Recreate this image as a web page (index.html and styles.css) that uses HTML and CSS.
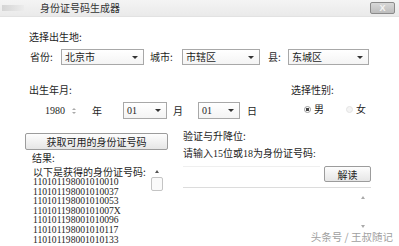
FILE: index.html
```html
<!DOCTYPE html>
<html lang="zh-CN">

<head>
    <meta charset="UTF-8">
    <meta name="viewport" content="width=device-width, initial-scale=1.0">
    <title>身份证号码生成器</title>
    <link rel="stylesheet" href="styles.css">
</head>

<body>
    <div class="window">
        <div class="titlebar">
            <span class="app-icon"></span>
            <span class="title">身份证号码生成器</span>
            <span class="close-btn">X</span>
        </div>

        <div class="content">
            <div class="label">选择出生地:</div>

            <div class="place-row">
                <span class="field-label province-label">省份:</span>
                <div class="combo combo-province"><span>北京市</span><i class="caret"></i></div>
                <span class="field-label city-label">城市:</span>
                <div class="combo combo-city"><span>市辖区</span><i class="caret"></i></div>
                <span class="field-label county-label">县:</span>
                <div class="combo combo-county"><span>东城区</span><i class="caret"></i></div>
            </div>

            <div class="birth-row">
                <div class="birth">
                    <div class="label">出生年月:</div>
                    <div class="date-row">
                        <span class="year">1980</span>
                        <span class="spinner"><i class="up"></i><i class="down"></i></span>
                        <span class="unit unit-year">年</span>
                        <div class="combo combo-month"><span>01</span><i class="caret"></i></div>
                        <span class="unit unit-month">月</span>
                        <div class="combo combo-day"><span>01</span><i class="caret"></i></div>
                        <span class="unit unit-day">日</span>
                    </div>
                </div>

                <div class="gender">
                    <div class="label">选择性别:</div>
                    <div class="radios">
                        <span class="radio checked"></span><span class="radio-text">男</span>
                        <span class="radio faded"></span><span class="radio-text">女</span>
                    </div>
                </div>
            </div>

            <div class="bottom">
                <div class="left">
                    <button class="get-btn">获取可用的身份证号码</button>
                    <div class="label result-label">结果:</div>
                    <div class="result-box">
                        <div class="result-list">
                            <div class="heading">以下是获得的身份证号码:</div>
                            <div>110101198001010010</div>
                            <div>110101198001010037</div>
                            <div>110101198001010053</div>
                            <div>11010119800101007X</div>
                            <div>110101198001010096</div>
                            <div>110101198001010117</div>
                            <div>110101198001010133</div>
                        </div>
                        <div class="scroll">
                            <i class="arrow-up"></i>
                            <span class="thumb"></span>
                        </div>
                    </div>
                </div>

                <div class="right">
                    <div class="label">验证与升降位:</div>
                    <div class="label hint">请输入15位或18为身份证号码:</div>
                    <div class="check-row">
                        <div class="id-input"></div>
                        <button class="read-btn">解读</button>
                    </div>
                    <div class="info-box">
                        <i class="arrow-up small"></i>
                        <i class="arrow-down small"></i>
                    </div>
                </div>
            </div>
        </div>

        <div class="watermark">头条号 / 王叔随记</div>
    </div>
</body>

</html>
```

FILE: styles.css
```css
* {
    box-sizing: border-box;
    margin: 0;
    padding: 0;
}

body {
    background-color: #ffffff;
    font-family: 'Noto Sans CJK SC', sans-serif;
    font-size: 10px;
    color: #1e1e1e;
}

.window {
    position: relative;
    width: 399px;
    height: 246px;
    overflow: hidden;
    background-color: #ffffff;
}

.titlebar {
    height: 17px;
    display: flex;
    align-items: center;
    background: linear-gradient(#f4f4f4, #eaeaea);
    border-bottom: 1px solid #e2e2e2;
}

.app-icon {
    width: 22px;
    height: 6px;
    margin-left: 2px;
    background: linear-gradient(90deg, #d4d4d4, #ececec);
}

.title {
    margin-left: 16px;
    line-height: 12px;
    font-size: 10px;
    color: #333;
}

.close-btn {
    margin-left: auto;
    margin-right: 4px;
    width: 25px;
    height: 12px;
    border: 1px solid #8a8a8a;
    border-radius: 2px;
    background: linear-gradient(#d8d8d8, #bdbdbd);
    color: #f4f4f4;
    font-family: 'Liberation Sans', sans-serif;
    font-size: 9px;
    font-weight: bold;
    line-height: 10px;
    text-align: center;
}

.content {
    padding: 14px 0 0 29px;
}

.label {
    line-height: 12px;
    white-space: nowrap;
}

/* place row */
.place-row {
    display: flex;
    align-items: center;
    margin-top: 6px;
    height: 16px;
}

.field-label {
    flex-shrink: 0;
    line-height: 12px;
    white-space: nowrap;
}

.province-label {
    margin-left: 1px;
    width: 31px;
}

.city-label {
    margin-left: 6px;
    width: 32px;
}

.county-label {
    margin-left: 8px;
    width: 20px;
}

.combo {
    display: flex;
    flex-shrink: 0;
    align-items: center;
    height: 16px;
    border: 1px solid #a8a8a8;
    background: linear-gradient(#ffffff, #f4f4f4);
    padding: 0 5px 0 3px;
}

.combo span {
    flex: 1;
    line-height: 12px;
}

.caret {
    width: 0;
    height: 0;
    border-left: 3px solid transparent;
    border-right: 3px solid transparent;
    border-top: 3px solid #333;
}

.combo-province {
    width: 83px;
}

.combo-city {
    width: 78px;
}

.combo-county {
    width: 81px;
}

/* birth date + gender */
.birth-row {
    display: flex;
    margin-top: 19px;
}

.birth {
    width: 262px;
    flex-shrink: 0;
}

.date-row {
    display: flex;
    align-items: center;
    margin-top: 6px;
    height: 17px;
}

.year {
    flex-shrink: 0;
    width: 24px;
    margin-left: 16px;
    font-family: 'Liberation Serif', serif;
    font-size: 10px;
}

.spinner {
    display: flex;
    flex-direction: column;
    gap: 2px;
    width: 4px;
    margin-left: 3px;
}

.spinner i {
    width: 0;
    height: 0;
    border-left: 2px solid transparent;
    border-right: 2px solid transparent;
}

.spinner .up {
    border-bottom: 2px solid #aaa;
}

.spinner .down {
    border-top: 2px solid #aaa;
}

.unit {
    flex-shrink: 0;
    width: 10px;
    line-height: 12px;
}

.unit-year {
    margin-left: 16px;
}

.combo-month {
    margin-left: 21px;
    width: 44px;
    height: 17px;
}

.unit-month {
    margin-left: 6px;
}

.combo-day {
    margin-left: 15px;
    width: 42px;
    height: 17px;
}

.unit-day {
    margin-left: 7px;
}

.combo-month span,
.combo-day span {
    font-family: 'Liberation Serif', serif;
}

.gender {
    flex-shrink: 0;
}

.radios {
    display: flex;
    align-items: center;
    margin-top: 6px;
    height: 14px;
    padding-left: 13px;
}

.radio {
    flex-shrink: 0;
    width: 7px;
    height: 7px;
    border: 1px solid #bbb;
    border-radius: 50%;
    background: #fff;
}

.radio.checked {
    background: radial-gradient(#444 0 1.5px, #fff 2px);
    border-color: #999;
}

.radio.faded {
    margin-left: 22px;
    border-color: #e4e4e4;
    background: #f4f4f4;
}

.radio-text {
    margin-left: 3px;
    line-height: 12px;
}

/* bottom area */
.bottom {
    display: flex;
    margin-top: 11px;
}

.left {
    width: 143px;
    margin-left: -4px;
}

.get-btn {
    display: block;
    width: 143px;
    height: 17px;
    margin-top: 3px;
    border: 1px solid #9c9c9c;
    border-radius: 2px;
    background: linear-gradient(#fdfdfd, #e6e6e6);
    font-family: 'Noto Sans CJK SC', sans-serif;
    font-size: 10px;
    line-height: 14px;
    color: #1e1e1e;
}

.result-label {
    margin-top: 2px;
    margin-left: 7px;
}

.result-box {
    display: flex;
    margin-top: 2px;
    margin-left: 8px;
    width: 130px;
}

.result-list {
    flex: 1;
    font-family: 'Liberation Serif', serif;
    font-size: 9.6px;
    line-height: 9.6px;
}

.result-list .heading {
    font-family: 'Noto Sans CJK SC', sans-serif;
    font-size: 10px;
    line-height: 11px;
}

.scroll {
    display: flex;
    flex-direction: column;
    align-items: center;
    width: 12px;
    padding-top: 4px;
}

.arrow-up {
    width: 0;
    height: 0;
    border-left: 2px solid transparent;
    border-right: 2px solid transparent;
    border-bottom: 3px solid #555;
}

.arrow-down {
    width: 0;
    height: 0;
    border-left: 2px solid transparent;
    border-right: 2px solid transparent;
    border-top: 3px solid #555;
}

.thumb {
    width: 12px;
    height: 14px;
    margin-top: 4px;
    border: 1px solid #c4c4c4;
    border-radius: 2px;
    background: #fafafa;
}

.right {
    margin-left: 15px;
    width: 188px;
}

.hint {
    margin-top: 6px;
    font-family: 'Liberation Serif', 'Noto Sans CJK SC', serif;
}

.check-row {
    display: flex;
    align-items: center;
    margin-top: 6px;
    height: 16px;
}

.id-input {
    flex: 1;
    height: 16px;
    border-top: 1px solid #efefef;
}

.read-btn {
    width: 47px;
    height: 16px;
    margin-left: 4px;
    border: 1px solid #9c9c9c;
    border-radius: 2px;
    background: linear-gradient(#fdfdfd, #e6e6e6);
    font-family: 'Noto Sans CJK SC', sans-serif;
    font-size: 10px;
    line-height: 13px;
    color: #1e1e1e;
}

.info-box {
    display: flex;
    flex-direction: column;
    align-items: flex-end;
    justify-content: space-between;
    margin-top: 5px;
    height: 44px;
    padding: 8px 6px 3px 0;
    border-top: 1px solid #dcdcdc;
}

.small {
    opacity: 0.5;
}

.watermark {
    position: absolute;
    right: 6px;
    bottom: 3px;
    font-size: 10.5px;
    line-height: 12px;
    color: #a0a0a0;
}
```
